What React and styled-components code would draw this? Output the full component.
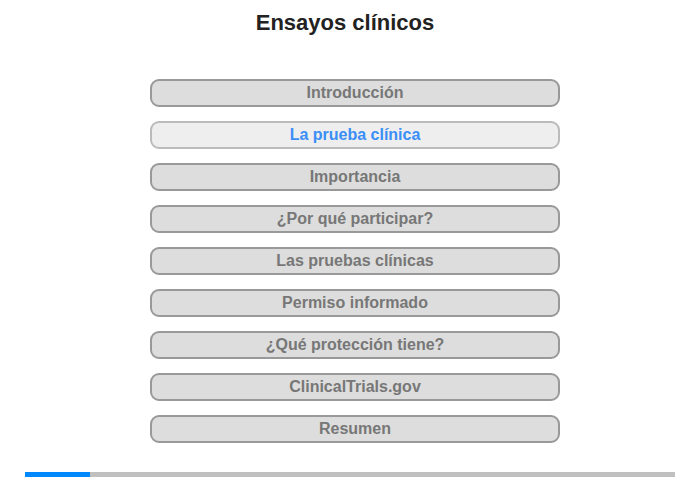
import React from "react";
import styled, { createGlobalStyle } from "styled-components";

const Global = createGlobalStyle`
  html, body { margin: 0; padding: 0; background: #fff; }
  body { font-family: "Liberation Sans", Arial, sans-serif; }
`;

const Page = styled.div`
  width: 700px;
  height: 480px;
  display: flex;
  flex-direction: column;
  align-items: center;
  box-sizing: border-box;
`;

const Title = styled.h1`
  margin: 10px 10px 0 0;
  font-size: 22px;
  line-height: 26px;
  font-weight: bold;
  color: #222;
`;

const Menu = styled.nav`
  margin: 43px 0 0 10px;
  display: flex;
  flex-direction: column;
  gap: 14px;
  width: 410px;
`;

const Item = styled.button`
  box-sizing: border-box;
  height: 28px;
  width: 100%;
  padding: 0;
  border: 2px solid ${(p) => (p.$active ? "#bbb" : "#999")};
  border-radius: 9px;
  background: ${(p) => (p.$active ? "#eee" : "#ddd")};
  color: ${(p) => (p.$active ? "#3a8ef6" : "#777")};
  font-family: "Liberation Sans", Arial, sans-serif;
  font-size: 16px;
  font-weight: bold;
  line-height: 24px;
  text-align: center;
  cursor: pointer;
`;

const Progress = styled.div`
  margin-top: 29px;
  width: 650px;
  height: 5px;
  background: #c0c0c0;
  display: flex;
`;

const Fill = styled.div`
  height: 100%;
  background: #0088ff;
`;

const items = [
  "Introducción",
  "La prueba clínica",
  "Importancia",
  "¿Por qué participar?",
  "Las pruebas clínicas",
  "Permiso informado",
  "¿Qué protección tiene?",
  "ClinicalTrials.gov",
  "Resumen",
];

export default function App() {
  return (
    <>
      <Global />
      <Page>
        <Title>Ensayos clínicos</Title>
        <Menu>
          {items.map((t, i) => (
            <Item key={t} $active={i === 1}>
              {t}
            </Item>
          ))}
        </Menu>
        <Progress>
          <Fill style={{ width: `${(65 / 650) * 100}%` }} />
        </Progress>
      </Page>
    </>
  );
}
